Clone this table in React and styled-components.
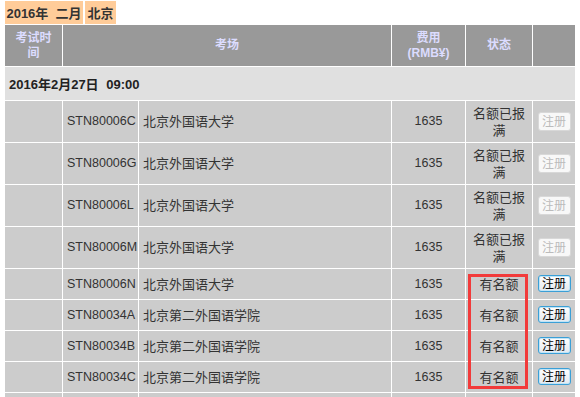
import React from "react";
import styled, { createGlobalStyle } from "styled-components";

const Global = createGlobalStyle`
  html, body { margin: 0; padding: 0; background: #fff; }
  body { font-family: "Liberation Sans", Arial, "Noto Sans CJK SC", sans-serif; }
`;

const Page = styled.div`
  position: relative;
  padding: 1px 4px 0 4px;
`;

const LabelBar = styled.div`
  display: flex;
  gap: 2px;
  margin-left: 1px;
  height: 23px;
`;

const Label = styled.span`
  display: flex;
  align-items: center;
  justify-content: center;
  width: ${(p) => p.$w}px;
  background: #ffcc99;
  color: #333;
  font-weight: bold;
  font-size: 13px;
  white-space: pre;
`;

const Table = styled.table`
  border-collapse: separate;
  border-spacing: 1px;
  table-layout: fixed;
  width: 572px;
  font-size: 12px;
  color: #333;
`;

const Th = styled.th`
  background: #999;
  color: #dcdcff;
  font-weight: bold;
  font-size: 12px;
  line-height: 15px;
  height: 41px;
  padding: 0 5px;
  text-align: center;
  vertical-align: middle;
`;

const DateCell = styled.td`
  background: #e0e0e0;
  height: 33px;
  padding: 0 4px;
  font-weight: bold;
  font-size: 13px;
  color: #222;
  word-spacing: 4px;
`;

const Td = styled.td`
  background: #ccc;
  height: ${(p) => (p.$tall ? 41 : 30)}px;
  padding: 0 ${(p) => (p.$pad ?? 4)}px;
  text-align: ${(p) => p.$align || "left"};
  vertical-align: middle;
  line-height: 17px;
  font-size: ${(p) => (p.$cjk ? 13 : 12.5)}px;
  white-space: ${(p) => (p.$nowrap ? "nowrap" : "normal")};
  overflow: hidden;
`;

const RegButton = styled.button`
  font-family: "Noto Sans CJK SC", sans-serif;
  font-size: 12px;
  line-height: 14px;
  padding: 0;
  width: 33px;
  height: ${(p) => (p.disabled ? 19 : 17)}px;
  border-radius: 3px;
  border: 1px solid ${(p) => (p.disabled ? "#d8d8d8" : "#3b9fd6")};
  background: ${(p) =>
    p.disabled ? "#f8f8f8" : "linear-gradient(#ffffff, #e4e8ee)"};
  color: ${(p) => (p.disabled ? "#bbb" : "#000")};
  box-shadow: ${(p) => (p.disabled ? "none" : "inset 0 0 0 1px #bfe4f7")};
`;

const Highlight = styled.div`
  position: absolute;
  left: 468px;
  top: 274px;
  width: 54px;
  height: 109px;
  border: 3px solid #f23a3a;
  pointer-events: none;
`;

const rows = [
  { code: "STN80006C", name: "北京外国语大学", full: true },
  { code: "STN80006G", name: "北京外国语大学", full: true },
  { code: "STN80006L", name: "北京外国语大学", full: true },
  { code: "STN80006M", name: "北京外国语大学", full: true },
  { code: "STN80006N", name: "北京外国语大学", full: false },
  { code: "STN80034A", name: "北京第二外国语学院", full: false },
  { code: "STN80034B", name: "北京第二外国语学院", full: false },
  { code: "STN80034C", name: "北京第二外国语学院", full: false },
];

export default function App() {
  return (
    <>
      <Global />
      <Page>
        <LabelBar>
          <Label $w={78}>2016年  二月</Label>
          <Label $w={31}>北京</Label>
        </LabelBar>
        <Table>
          <colgroup>
            <col style={{ width: 57 }} />
            <col style={{ width: 75 }} />
            <col style={{ width: 252 }} />
            <col style={{ width: 73 }} />
            <col style={{ width: 66 }} />
            <col style={{ width: 42 }} />
          </colgroup>
          <thead>
            <tr>
              <Th>考试时间</Th>
              <Th colSpan={2}>考场</Th>
              <Th>
                费用
                <br />
                (RMB¥)
              </Th>
              <Th>状态</Th>
              <Th />
            </tr>
          </thead>
          <tbody>
            <tr>
              <DateCell colSpan={6}>2016年2月27日 09:00</DateCell>
            </tr>
            {rows.map((r) => (
              <tr key={r.code}>
                <Td $tall={r.full} />
                <Td $tall={r.full} $nowrap>{r.code}</Td>
                <Td $tall={r.full} $cjk>{r.name}</Td>
                <Td $tall={r.full} $align="center">1635</Td>
                <Td $tall={r.full} $align="center" $cjk $pad={6}>
                  {r.full ? "名额已报满" : "有名额"}
                </Td>
                <Td $tall={r.full} $align="center" $pad={0}>
                  <RegButton disabled={r.full}>注册</RegButton>
                </Td>
              </tr>
            ))}
            <tr>
              <Td />
              <Td />
              <Td />
              <Td />
              <Td />
              <Td />
            </tr>
          </tbody>
        </Table>
        <Highlight />
      </Page>
    </>
  );
}
